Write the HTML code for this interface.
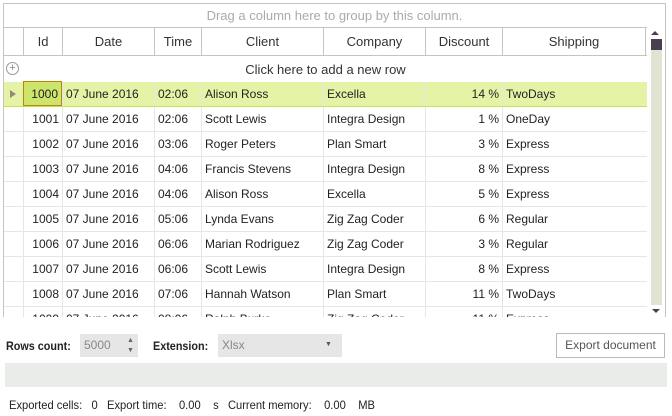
<!DOCTYPE html>
<html><head><style>
*{margin:0;padding:0;box-sizing:border-box}
body{width:672px;height:416px;background:#fff;font-family:"Liberation Sans",sans-serif;font-size:12px;color:#222;position:relative;overflow:hidden}
.a{position:absolute;white-space:nowrap}
.grid{position:absolute;left:3px;top:3px;width:663px;height:314px;border:1px solid #c5c5bb;border-bottom:none;overflow:hidden}
.hdr{position:absolute;top:23px;left:0;width:643px;height:29px;border-top:1px solid #c5c5bb;border-bottom:1px solid #c5c5bb}
.hc{position:absolute;top:0;height:27px;line-height:27px;text-align:center;font-size:13px;color:#333;border-left:1px solid #c5c5bb}
.row{position:absolute;left:0;width:643px;height:25px;border-bottom:1px solid #e6e6e6}
.c{position:absolute;top:0;height:24px;line-height:24px;padding:0 3px;border-left:1px solid #e6e6e6;overflow:hidden}
.r{text-align:right}
</style></head><body>
<div class="grid">
 <div class="a" style="left:0;top:0;width:661px;height:23px;line-height:23px;text-align:center;color:#aaa;font-size:13px">Drag a column here to group by this column.</div>
 <div class="hdr">
  <div class="hc" style="left:19px;width:39px">Id</div>
  <div class="hc" style="left:58px;width:92px">Date</div>
  <div class="hc" style="left:150px;width:47px">Time</div>
  <div class="hc" style="left:197px;width:122px">Client</div>
  <div class="hc" style="left:319px;width:102px">Company</div>
  <div class="hc" style="left:421px;width:77px">Discount</div>
  <div class="hc" style="left:498px;width:144px;border-right:1px solid #c5c5bb">Shipping</div>
 </div>
 <div class="a" style="left:0;top:53px;width:643px;height:25px;line-height:25px;text-align:center;font-size:13px;color:#333">Click here to add a new row</div>
 <div class="a" style="left:2px;top:58px;width:13px;height:13px;border:1px solid #999;border-radius:50%;font-size:11px;line-height:11px;text-align:center;color:#888">+</div>
 <div id="rows"></div>
 <div class="a" style="left:647px;top:27px;width:0;height:0;border-left:4px solid transparent;border-right:4px solid transparent;border-bottom:4px solid #4a3f4f"></div>
 <div class="a" style="left:647px;top:35px;width:11px;height:266px;background:#e1e3d3"></div>
 <div class="a" style="left:647px;top:35px;width:11px;height:11px;background:#4a3f4f"></div>
 <div class="a" style="left:648px;top:305px;width:0;height:0;border-left:4px solid transparent;border-right:4px solid transparent;border-top:4px solid #4a3f4f"></div>
</div>
<div class="a" style="left:6px;top:339px;font-weight:bold;font-size:12px;transform:scaleX(.9);transform-origin:left">Rows count:</div>
<div class="a" style="left:80px;top:334px;width:58px;height:23px;background:#e6e6e6;color:#888;line-height:23px;padding-left:4px;font-size:12px">5000</div>
<div class="a" style="left:127px;top:337px;font-size:7px;color:#666">▲</div>
<div class="a" style="left:127px;top:347px;font-size:7px;color:#666">▼</div>
<div class="a" style="left:153px;top:339px;font-weight:bold;font-size:12px;transform:scaleX(.9);transform-origin:left">Extension:</div>
<div class="a" style="left:218px;top:334px;width:124px;height:23px;background:#e6e6e6;color:#888;line-height:23px;padding-left:4px">Xlsx</div>
<div class="a" style="top:341px;font-size:7px;color:#555;left:325px">▼</div>
<div class="a" style="left:556px;top:333px;width:109px;height:25px;border:1px solid #bbb;line-height:23px;text-align:center;color:#555;font-size:12px">Export document</div>
<div class="a" style="left:5px;top:363px;width:662px;height:24px;background:#e9ece8"></div>
<div class="a" style="left:9px;top:398px;font-size:12px;color:#222;transform:scaleX(.93);transform-origin:left">Exported cells:&nbsp;&nbsp;&nbsp;0&nbsp;&nbsp;&nbsp;Export time:&nbsp;&nbsp;&nbsp;&nbsp;0.00&nbsp;&nbsp;&nbsp;&nbsp;s&nbsp;&nbsp;&nbsp;Current memory:&nbsp;&nbsp;&nbsp;&nbsp;0.00&nbsp;&nbsp;&nbsp;&nbsp;MB</div>
<script>
var d=[["1000","02:06","Alison Ross","Excella","14 %","TwoDays"],["1001","02:06","Scott Lewis","Integra Design","1 %","OneDay"],["1002","03:06","Roger Peters","Plan Smart","3 %","Express"],["1003","04:06","Francis Stevens","Integra Design","8 %","Express"],["1004","04:06","Alison Ross","Excella","5 %","Express"],["1005","05:06","Lynda Evans","Zig Zag Coder","6 %","Regular"],["1006","06:06","Marian Rodriguez","Zig Zag Coder","3 %","Regular"],["1007","06:06","Scott Lewis","Integra Design","8 %","Express"],["1008","07:06","Hannah Watson","Plan Smart","11 %","TwoDays"],["1009","08:06","Ralph Burke","Zig Zag Coder","11 %","Express"]];
var h="";
d.forEach(function(r,i){var s=i==0;
h+='<div class="row" style="top:'+(78+i*25)+'px;'+(s?'background:#e5f3a7;border-bottom-color:#c9e05a':'')+'">'+
(s?'<div class="a" style="left:6px;top:8px;border-top:4px solid transparent;border-bottom:4px solid transparent;border-left:6px solid #998877"></div>':'')+
'<div class="c r" style="left:19px;width:39px;'+(s?'background:#cde56b;border:1px solid #b8860b;height:25px;top:-1px':'')+'">'+r[0]+'</div>'+
'<div class="c" style="left:58px;width:92px">07 June 2016</div>'+
'<div class="c" style="left:150px;width:47px">'+r[1]+'</div>'+
'<div class="c" style="left:197px;width:122px">'+r[2]+'</div>'+
'<div class="c" style="left:319px;width:102px">'+r[3]+'</div>'+
'<div class="c r" style="left:421px;width:77px">'+r[4]+'</div>'+
'<div class="c" style="left:498px;width:145px">'+r[5]+'</div></div>';});
document.getElementById("rows").innerHTML=h;
</script>
</body></html>
